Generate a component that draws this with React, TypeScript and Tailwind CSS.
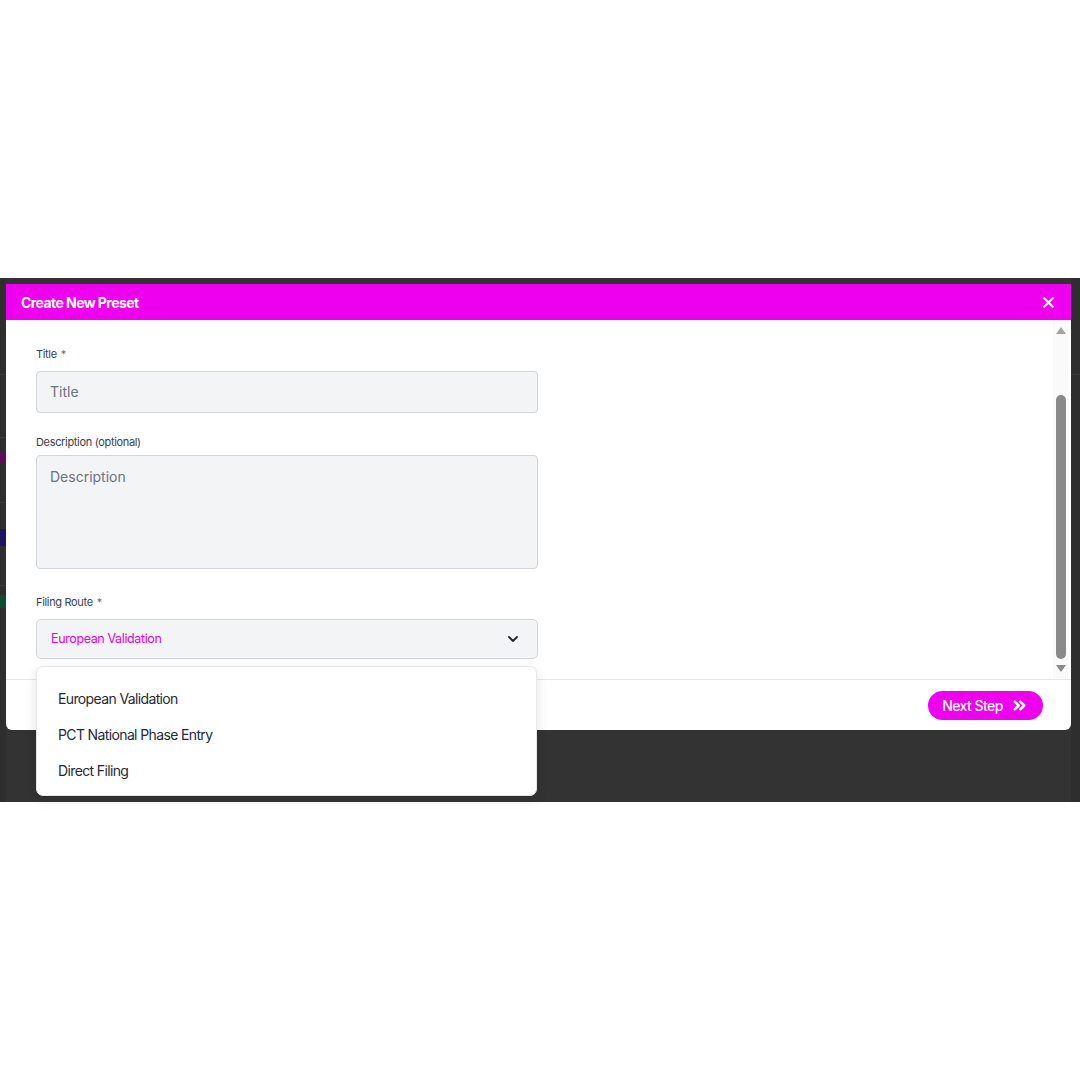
import React from 'react';
import { X, ChevronDown, ChevronsRight } from 'lucide-react';

const font = { fontFamily: 'Inter, "Liberation Sans", sans-serif' };

const Label: React.FC<{ text: string; required?: boolean }> = ({ text, required }) => (
  <div className="text-[11px] leading-[14px] text-[#374151] tracking-[-0.03em]">
    {text}
    {required && <span className="ml-[4px] text-[#6b7280]">*</span>}
  </div>
);

const EdgeStrip: React.FC = () => (
  <div className="w-[6px] shrink-0 bg-[#2e2e2e] flex flex-col">
    <div className="h-[97px] border-b border-[#3a3a3a]" />
    <div className="h-[63px] border-b border-[#3a3a3a]" />
    <div className="mt-[14px] h-[11px] bg-[#5a0f5a]" />
    <div className="h-[40px] border-b border-[#3a3a3a]" />
    <div className="mt-[26px] h-[17px] bg-[#1c1660]" />
    <div className="h-[40px] border-b border-[#3a3a3a]" />
    <div className="mt-[9px] h-[13px] bg-[#0f4a33]" />
  </div>
);

export default function App() {
  return (
    <div className="h-[1080px] bg-white flex flex-col" style={font}>
      <div className="h-[278px] shrink-0" />
      <div className="h-[524px] shrink-0 bg-[#333333] flex">
        <EdgeStrip />
        <div className="relative mt-[6px] w-[1065px] h-[446px] bg-white rounded-b-[6px] flex flex-col">
          <div className="h-[36px] bg-[#ee00ee] flex items-center justify-between pl-[15px] pr-[14px]">
            <span className="text-white text-[14px] font-bold tracking-[-0.04em]">Create New Preset</span>
            <X size={17} strokeWidth={3.2} className="text-white" />
          </div>
          <div className="h-[359px] flex">
            <div className="flex-1 pl-[30px] pt-[27px]">
              <Label text="Title" required />
              <input
                placeholder="Title"
                className="mt-[10px] w-[502px] h-[42px] bg-[#f3f4f6] border border-[#d1d5db] rounded-[4px] px-[13px] pb-[2px] text-[14px] text-[#374151] placeholder:text-[#6b7280] outline-none"
              />
              <div className="mt-[22px]">
                <Label text="Description (optional)" />
              </div>
              <textarea
                placeholder="Description"
                className="mt-[6px] block w-[502px] h-[114px] resize-none bg-[#f3f4f6] border border-[#d1d5db] rounded-[4px] px-[13px] pt-[10px] text-[14px] text-[#374151] placeholder:text-[#6b7280] outline-none"
              />
              <div className="mt-[26px]">
                <Label text="Filing Route" required />
              </div>
              <div className="relative mt-[10px] w-[502px]">
                <div className="h-[40px] bg-[#f3f4f6] border border-[#d1d5db] rounded-[5px] flex items-center justify-between pl-[14px] pr-[16px]">
                  <span className="text-[12.5px] text-[#e400e4] tracking-[-0.03em]">European Validation</span>
                  <ChevronDown size={16} strokeWidth={2.8} className="text-[#1f2937]" />
                </div>
                <div className="absolute z-10 left-0 top-[47px] w-[501px] h-[130px] bg-white border border-[#e5e7eb] rounded-[7px] shadow-[0_4px_12px_rgba(0,0,0,0.12)] pt-[13px] flex flex-col">
                  {['European Validation', 'PCT National Phase Entry', 'Direct Filing'].map((o) => (
                    <div key={o} className="h-[36px] flex items-center pl-[21px] text-[14px] text-[#1f2937] tracking-[-0.045em]">
                      {o}
                    </div>
                  ))}
                </div>
              </div>
            </div>
            <div className="w-[16px] mr-[2px] bg-[#fafafa] flex flex-col items-center pt-[7px] pb-[7px]">
              <div className="w-0 h-0 border-l-[5px] border-r-[5px] border-b-[7px] border-l-transparent border-r-transparent border-b-[#a3a3a3]" />
              <div className="flex-1 w-full flex flex-col items-center pt-[61px] pb-[6px]">
                <div className="w-[10px] flex-1 rounded-full bg-[#8a8a8a]" />
              </div>
              <div className="w-0 h-0 border-l-[5px] border-r-[5px] border-t-[7px] border-l-transparent border-r-transparent border-t-[#8a8a8a]" />
            </div>
          </div>
          <div className="flex-1 border-t border-[#e5e7eb] flex items-center justify-end pr-[28px]">
            <button className="h-[29px] w-[115px] rounded-full bg-[#ee00ee] text-white text-[14px] font-medium tracking-[-0.04em] flex items-center justify-center gap-[7px]">
              Next Step
              <ChevronsRight size={19} strokeWidth={3.2} />
            </button>
          </div>
        </div>
        <div className="flex-1 bg-[#2e2e2e] flex flex-col">
          <div className="h-[97px] border-b border-[#3a3a3a]" />
        </div>
      </div>
    </div>
  );
}
